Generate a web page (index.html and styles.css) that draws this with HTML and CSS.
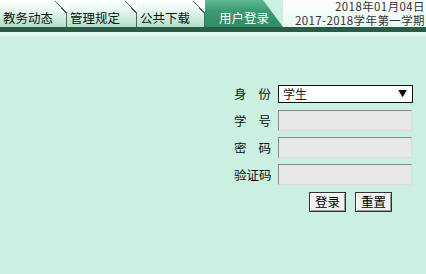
FILE: index.html
```html
<!DOCTYPE html>
<html lang="zh-CN">
<head>
  <meta charset="UTF-8">
  <title>用户登录</title>
  <link rel="stylesheet" href="styles.css">
</head>
<body>
  <div class="top">
    <div class="tabs">
      <a class="tab" style="width:67px">教务动态</a>
      <a class="tab" style="width:70px">管理规定</a>
      <a class="tab" style="width:68px">公共下载</a>
      <a class="tab active">用户登录</a>
    </div>
    <div class="date">
      <div>2018年01月04日</div>
      <div>2017-2018学年第一学期</div>
    </div>
  </div>
  <div class="bar"></div>
  <div class="strip"></div>

  <form class="login">
    <div class="row">
      <label>身份</label>
      <div class="select"><span>学生</span><span class="arrow">▼</span></div>
    </div>
    <div class="row">
      <label>学号</label>
      <input type="text">
    </div>
    <div class="row">
      <label>密码</label>
      <input type="password">
    </div>
    <div class="row">
      <label>验证码</label>
      <input type="text">
    </div>
    <div class="buttons">
      <button type="button">登录</button>
      <button type="button">重置</button>
    </div>
  </form>
</body>
</html>
```

FILE: styles.css
```css
body {
  margin: 0;
  background: #cbf0e1;
  font-family: "Noto Sans CJK SC", "DejaVu Sans", sans-serif;
  font-size: 12px;
  color: #222;
}

.top {
  display: flex;
  height: 27px;
  background: #cbf0e1;
}

.tabs {
  display: flex;
}

.tab {
  position: relative;
  box-sizing: border-box;
  height: 27px;
  padding: 10px 0 0 3px;
  font-size: 12.5px;
  line-height: 16px;
  color: #111;
  background: linear-gradient(#ffffff, #eaf8f1 35%, #b0e0c9);
  border-right: 1px solid #4d6a5c;
}

.tab::after {
  content: "";
  position: absolute;
  top: 0;
  right: -1px;
  width: 12px;
  height: 13px;
  background: linear-gradient(to top right, transparent calc(50% - 1px), #4a5a52 calc(50% - 1px), #4a5a52 50%, #ffffff 50%);
}

.tab.active {
  width: 78px;
  padding-left: 14px;
  color: #fff;
  border-right: none;
  background: linear-gradient(#5fb892, #3a9a70 40%, #2f8c63);
  clip-path: polygon(0 0, 58px 0, 100% 100%, 0 100%);
}

.tab.active::after {
  display: none;
}

.date {
  flex: 1;
  text-align: right;
  font-size: 11.5px;
  line-height: 13.5px;
  letter-spacing: 0.4px;
  white-space: nowrap;
  color: #333;
  padding-right: 1px;
  background: linear-gradient(#ffffff, #e8f8f0);
}

.bar {
  height: 5px;
  background: #2b5a46;
}

.strip {
  height: 4px;
  background: #e2f7ee;
}

.login {
  display: flex;
  flex-direction: column;
  margin: 44px 0 0 234px;
  width: 180px;
}

.row {
  display: flex;
  align-items: center;
  height: 27px;
}

.row label {
  width: 37px;
  margin-right: 7px;
  font-size: 12.5px;
  white-space: nowrap;
  text-align: justify;
  text-align-last: justify;
  color: #111;
}

.select {
  box-sizing: border-box;
  display: flex;
  justify-content: space-between;
  align-items: center;
  width: 135px;
  height: 18px;
  padding: 0 5px 0 4px;
  background: #fff;
  border: 1px solid #111;
  line-height: 16px;
}

.arrow {
  font-size: 9px;
  color: #000;
}

.row input {
  box-sizing: border-box;
  width: 134px;
  height: 21px;
  margin: 0;
  background: #e8e8e8;
  border: 1px solid #dcdcdc;
  border-top-color: #8a8a8a;
  border-left-color: #8a8a8a;
}

.buttons {
  display: flex;
  gap: 9px;
  margin: 4px 0 0 75px;
}

.buttons button {
  box-sizing: border-box;
  height: 20px;
  padding: 0 5px;
  font-family: inherit;
  font-size: 12.5px;
  line-height: 16px;
  color: #000;
  background: #f2f2f2;
  border: 1px solid #333;
  box-shadow: inset 1px 1px 0 #fff, inset -1px -1px 0 #999;
}
```
